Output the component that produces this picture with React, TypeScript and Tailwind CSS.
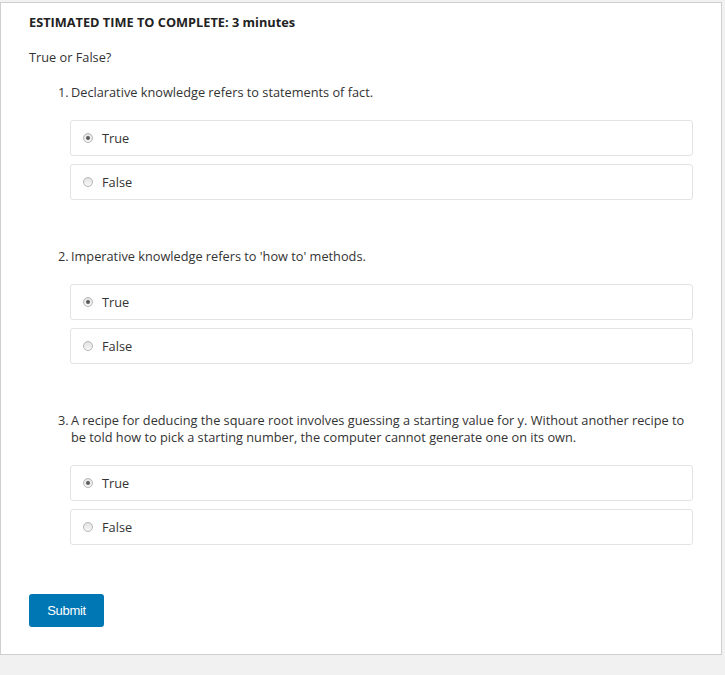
import React from 'react';

const questions = [
  { n: 1, text: 'Declarative knowledge refers to statements of fact.' },
  { n: 2, text: "Imperative knowledge refers to 'how to' methods." },
  {
    n: 3,
    text: 'A recipe for deducing the square root involves guessing a starting value for y. Without another recipe to be told how to pick a starting number, the computer cannot generate one on its own.',
  },
];

const Radio: React.FC<{ checked?: boolean }> = ({ checked }) => (
  <span className="w-[10px] h-[10px] rounded-full border border-[#b5b5b5] bg-gradient-to-b from-[#e2e2e2] to-[#f8f8f8] flex items-center justify-center shrink-0">
    {checked && <span className="w-[4px] h-[4px] rounded-full bg-[#5a5a5a]" />}
  </span>
);

const Option: React.FC<{ label: string; checked?: boolean }> = ({ label, checked }) => (
  <label className="h-[36px] border border-[#e3e3e3] rounded-[3px] flex items-center pl-[12px] gap-[9px] cursor-pointer">
    <Radio checked={checked} />
    <span>{label}</span>
  </label>
);

export default function App() {
  return (
    <div className="min-h-[675px] bg-[#f1f1f1] pt-[2px] font-['Open_Sans',sans-serif] text-[12.75px] leading-[17px] text-[#333]">
      <div className="w-[722px] bg-white border border-[#cfcfcf] pt-[11px] pb-[27px]">
        <div className="pl-[28px] font-bold text-[#222]">ESTIMATED TIME TO COMPLETE: 3 minutes</div>
        <div className="pl-[28px] mt-[18px]">True or False?</div>

        <div className="pl-[57px] pr-[28px]">
          {questions.map((q, i) => (
            <div key={q.n} className={i === 0 ? 'mt-[18px]' : 'mt-[48px]'}>
              <div className="flex">
                <span className="w-[13px] shrink-0">{q.n}.</span>
                <span>{q.text}</span>
              </div>
              <div className="ml-[12px] mt-[19px] flex flex-col gap-[8px]">
                <Option label="True" checked />
                <Option label="False" />
              </div>
            </div>
          ))}
        </div>

        <div className="pl-[28px] mt-[49px]">
          <button className="h-[33px] w-[75px] bg-[#0077b5] text-white rounded-[3px] font-['Liberation_Sans',Arial,sans-serif] text-[13px] tracking-[-0.3px]">
            Submit
          </button>
        </div>
      </div>
    </div>
  );
}
